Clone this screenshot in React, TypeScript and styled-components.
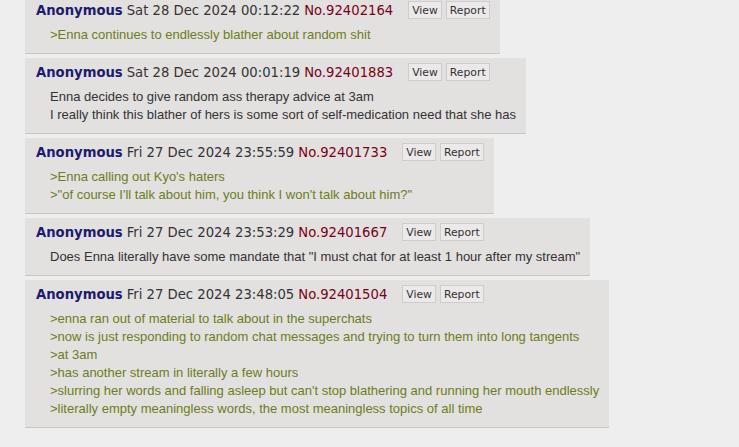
import React from 'react';
import styled, { createGlobalStyle } from 'styled-components';

interface PostData {
  no: string;
  date: string;
  lines: string[];
}

const posts: PostData[] = [
  {
    no: '92402164',
    date: 'Sat 28 Dec 2024 00:12:22',
    lines: ['>Enna continues to endlessly blather about random shit'],
  },
  {
    no: '92401883',
    date: 'Sat 28 Dec 2024 00:01:19',
    lines: [
      'Enna decides to give random ass therapy advice at 3am',
      'I really think this blather of hers is some sort of self-medication need that she has',
    ],
  },
  {
    no: '92401733',
    date: 'Fri 27 Dec 2024 23:55:59',
    lines: [
      ">Enna calling out Kyo's haters",
      '>"of course I\'ll talk about him, you think I won\'t talk about him?"',
    ],
  },
  {
    no: '92401667',
    date: 'Fri 27 Dec 2024 23:53:29',
    lines: [
      'Does Enna literally have some mandate that "I must chat for at least 1 hour after my stream"',
    ],
  },
  {
    no: '92401504',
    date: 'Fri 27 Dec 2024 23:48:05',
    lines: [
      '>enna ran out of material to talk about in the superchats',
      '>now is just responding to random chat messages and trying to turn them into long tangents',
      '>at 3am',
      '>has another stream in literally a few hours',
      ">slurring her words and falling asleep but can't stop blathering and running her mouth endlessly",
      '>literally empty meaningless words, the most meaningless topics of all time',
    ],
  },
];

const GlobalStyle = createGlobalStyle`
  html, body {
    margin: 0;
    padding: 0;
    background: #eeeeee;
    overflow: hidden;
  }
`;

const Thread = styled.div`
  display: flex;
  flex-direction: column;
  align-items: flex-start;
  gap: 4px;
  margin-top: -4px;
  padding-left: 25px;
`;

const Reply = styled.div`
  background: #e3e0e0;
  border-bottom: 1px solid #c8c6c6;
  padding: 5px 10px 9px 11px;
`;

const PostInfo = styled.div`
  display: flex;
  align-items: center;
  height: 18px;
  font-family: 'DejaVu Sans', Verdana, sans-serif;
  font-size: 13.2px;
  color: #333333;
  white-space: nowrap;
`;

const Name = styled.span`
  font-weight: bold;
  color: #1b1b6f;
  margin-right: 4px;
`;

const PostNo = styled.span`
  color: #7a0019;
  margin-left: 4px;
  margin-right: 15px;
`;

const Buttons = styled.span`
  display: inline-flex;
  gap: 4px;
`;

const Button = styled.span`
  display: inline-flex;
  align-items: center;
  height: 16px;
  padding: 0 3px;
  background: #ebe9e9;
  border: 1px solid #cfcccc;
  font-size: 10.8px;
  color: #333333;
`;

const Body = styled.div`
  margin-top: 7px;
  padding-left: 14px;
  font-family: 'Liberation Sans', Arial, sans-serif;
  font-size: 13px;
  line-height: 18px;
  color: #333333;
  white-space: nowrap;
`;

const Line = styled.div<{ $quote: boolean }>`
  color: ${(p) => (p.$quote ? '#6c7e1b' : '#333333')};
`;

const Post: React.FC<{ post: PostData }> = ({ post }) => (
  <Reply>
    <PostInfo>
      <Name>Anonymous</Name>
      <span>{post.date}</span>
      <PostNo>No.{post.no}</PostNo>
      <Buttons>
        <Button>View</Button>
        <Button>Report</Button>
      </Buttons>
    </PostInfo>
    <Body>
      {post.lines.map((line, i) => (
        <Line key={i} $quote={line.startsWith('>')}>
          {line}
        </Line>
      ))}
    </Body>
  </Reply>
);

const App: React.FC = () => (
  <>
    <GlobalStyle />
    <Thread>
      {posts.map((p) => (
        <Post key={p.no} post={p} />
      ))}
    </Thread>
  </>
);

export default App;
